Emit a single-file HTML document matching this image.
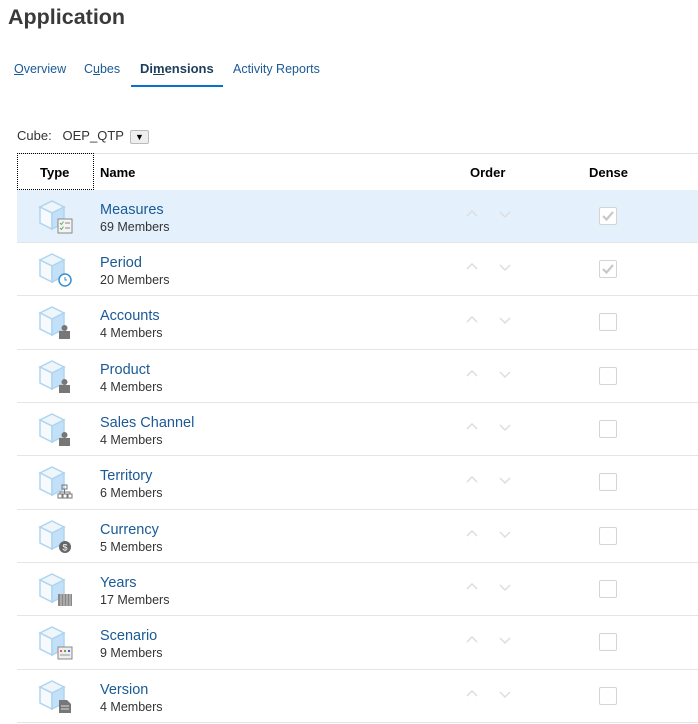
<!DOCTYPE html>
<html><head><meta charset="utf-8"><style>
*{margin:0;padding:0;box-sizing:border-box}
body{width:698px;height:724px;overflow:hidden;background:#fff;font-family:"Liberation Sans",Arial,sans-serif;position:relative;color:#333}
.abs{position:absolute}
h1{position:absolute;left:8px;top:5px;font-size:21.5px;font-weight:bold;color:#3a3a3a}
.tab{position:absolute;top:62px;font-size:12.5px;color:#1a5a96}
.hd{position:absolute;top:165px;font-size:13px;font-weight:bold;color:#000}
.row{position:absolute;left:17px;width:681px;height:54px;border-bottom:1px solid #e5e5e5}
.nm{position:absolute;left:83px;top:12px;font-size:14.5px;color:#1a5a96}
.mb{position:absolute;left:83px;top:30px;font-size:12.5px;color:#333}
.ic{position:absolute;left:19px;top:7px}
.ar{position:absolute;top:18px}
.cb{position:absolute;left:582px;top:17px;width:18px;height:18px;border:1px solid #d4d4d4;border-radius:2px;background:#fff}
</style></head><body>
<h1>Application</h1>
<div class="tab" style="left:14px"><u>O</u>verview</div>
<div class="tab" style="left:84px">C<u>u</u>bes</div>
<div class="tab" style="left:140px;font-weight:bold;color:#1c3d5c;font-size:13px;top:61px">Di<u>m</u>ensions</div>
<div class="abs" style="left:131px;top:85px;width:92px;height:2px;background:#0572ce"></div>
<div class="tab" style="left:233px">Activity Reports</div>
<div class="abs" style="left:17px;top:128px;font-size:13px;color:#333">Cube:&nbsp;&nbsp;&nbsp;OEP_QTP</div>
<div class="abs" style="left:130px;top:130px;width:19px;height:14px;border:1px solid #bbb;border-radius:2px;background:#eee;font-size:9px;text-align:center;line-height:12px;color:#000">▼</div>
<div class="abs" style="left:17px;top:153px;width:681px;height:1px;background:#dde3e8"></div>
<div class="abs" style="left:17px;top:153px;width:77px;height:37px;border:1px dotted #000"></div>
<div class="hd" style="left:40px">Type</div>
<div class="hd" style="left:100px">Name</div>
<div class="hd" style="left:470px">Order</div>
<div class="hd" style="left:589px">Dense</div>
<div id="rows"></div>
<script>
var d=[["Measures","69 Members","m",1],["Period","20 Members","c",1],["Accounts","4 Members","p",0],["Product","4 Members","p",0],["Sales Channel","4 Members","p",0],["Territory","6 Members","t",0],["Currency","5 Members","d",0],["Years","17 Members","y",0],["Scenario","9 Members","s",0],["Version","4 Members","v",0]];
var tops=[190,243,296,350,403,456,510,563,616,670];
var h="";
function badge(k){
 if(k=="m")return '<rect x="22" y="22" width="14" height="14" fill="#f4f4f4" stroke="#888"/><path d="M24 26l1.5 1.5 2-3M24 31l1.5 1.5 2-3" stroke="#6a6" fill="none"/><path d="M29 26h5M29 31h5" stroke="#888"/>';
 if(k=="c")return '<circle cx="29" cy="30" r="6" fill="#fff" stroke="#3a8fd0" stroke-width="1.5"/><path d="M29 27v3h2" stroke="#3a8fd0" fill="none"/>';
 if(k=="p")return '<rect x="23" y="28" width="11" height="8" fill="#777"/><circle cx="28.5" cy="25" r="3" fill="#777"/>';
 if(k=="t")return '<rect x="26" y="22" width="5" height="4" fill="none" stroke="#777"/><rect x="22" y="31" width="4" height="4" fill="none" stroke="#777"/><rect x="27" y="31" width="4" height="4" fill="none" stroke="#777"/><rect x="32" y="31" width="4" height="4" fill="none" stroke="#777"/><path d="M28.5 26v5M24 31v-2h10v2" stroke="#777" fill="none"/>';
 if(k=="d")return '<circle cx="29" cy="30" r="6" fill="#666"/><text x="26.5" y="33.5" font-size="9" fill="#fff" font-family="Liberation Sans">$</text>';
 if(k=="y")return '<rect x="22" y="24" width="14" height="12" fill="#888"/><path d="M25 24v12M28 24v12M31 24v12M34 24v12" stroke="#ccc"/>';
 if(k=="s")return '<rect x="22" y="24" width="14" height="12" fill="#eee" stroke="#888"/><rect x="24" y="27" width="2" height="2" fill="#e55"/><rect x="28" y="27" width="2" height="2" fill="#5a5"/><rect x="32" y="27" width="2" height="2" fill="#55e"/><path d="M24 32h10" stroke="#999"/>';
 return '<path d="M23 23h8l4 4v9h-12z" fill="#777"/><path d="M25 29h8M25 32h8" stroke="#ddd"/>';
}
for(var i=0;i<10;i++){
 var t=tops[i],hh=(tops[i+1]||723)-t;
 h+='<div class="row" style="top:'+t+'px;height:'+hh+'px;'+(i==0?'background:#e4f0fc;':'')+'">';
 h+='<svg class="ic" width="42" height="42"><polygon points="16,4 28,10 16,16 4,10" fill="#eef6fc" stroke="#b0d4f0" stroke-width="1.5"/><polygon points="4,10 16,16 16,32 4,26" fill="#f6fafd" stroke="#b0d4f0" stroke-width="1.5"/><polygon points="16,16 28,10 28,26 16,32" fill="#c2e0f7" stroke="#b0d4f0" stroke-width="1.5"/>'+badge(d[i][2])+'</svg>';
 h+='<div class="nm">'+d[i][0]+'</div><div class="mb">'+d[i][1]+'</div>';
 h+='<svg class="ar" style="left:448px" width="14" height="12"><path d="M2 8l5-5 5 5" stroke="#ddd" stroke-width="1.5" fill="none"/></svg>';
 h+='<svg class="ar" style="left:481px" width="14" height="12"><path d="M2 4l5 5 5-5" stroke="#ddd" stroke-width="1.5" fill="none"/></svg>';
 h+='<div class="cb">'+(d[i][3]?'<svg width="16" height="16" style="position:absolute;left:0;top:0"><path d="M3 8l3.5 3.5L13 4" stroke="#c8c8c8" stroke-width="2.2" fill="none"/></svg>':'')+'</div>';
 h+='</div>';
}
document.getElementById("rows").innerHTML=h;
</script>
</body></html>
